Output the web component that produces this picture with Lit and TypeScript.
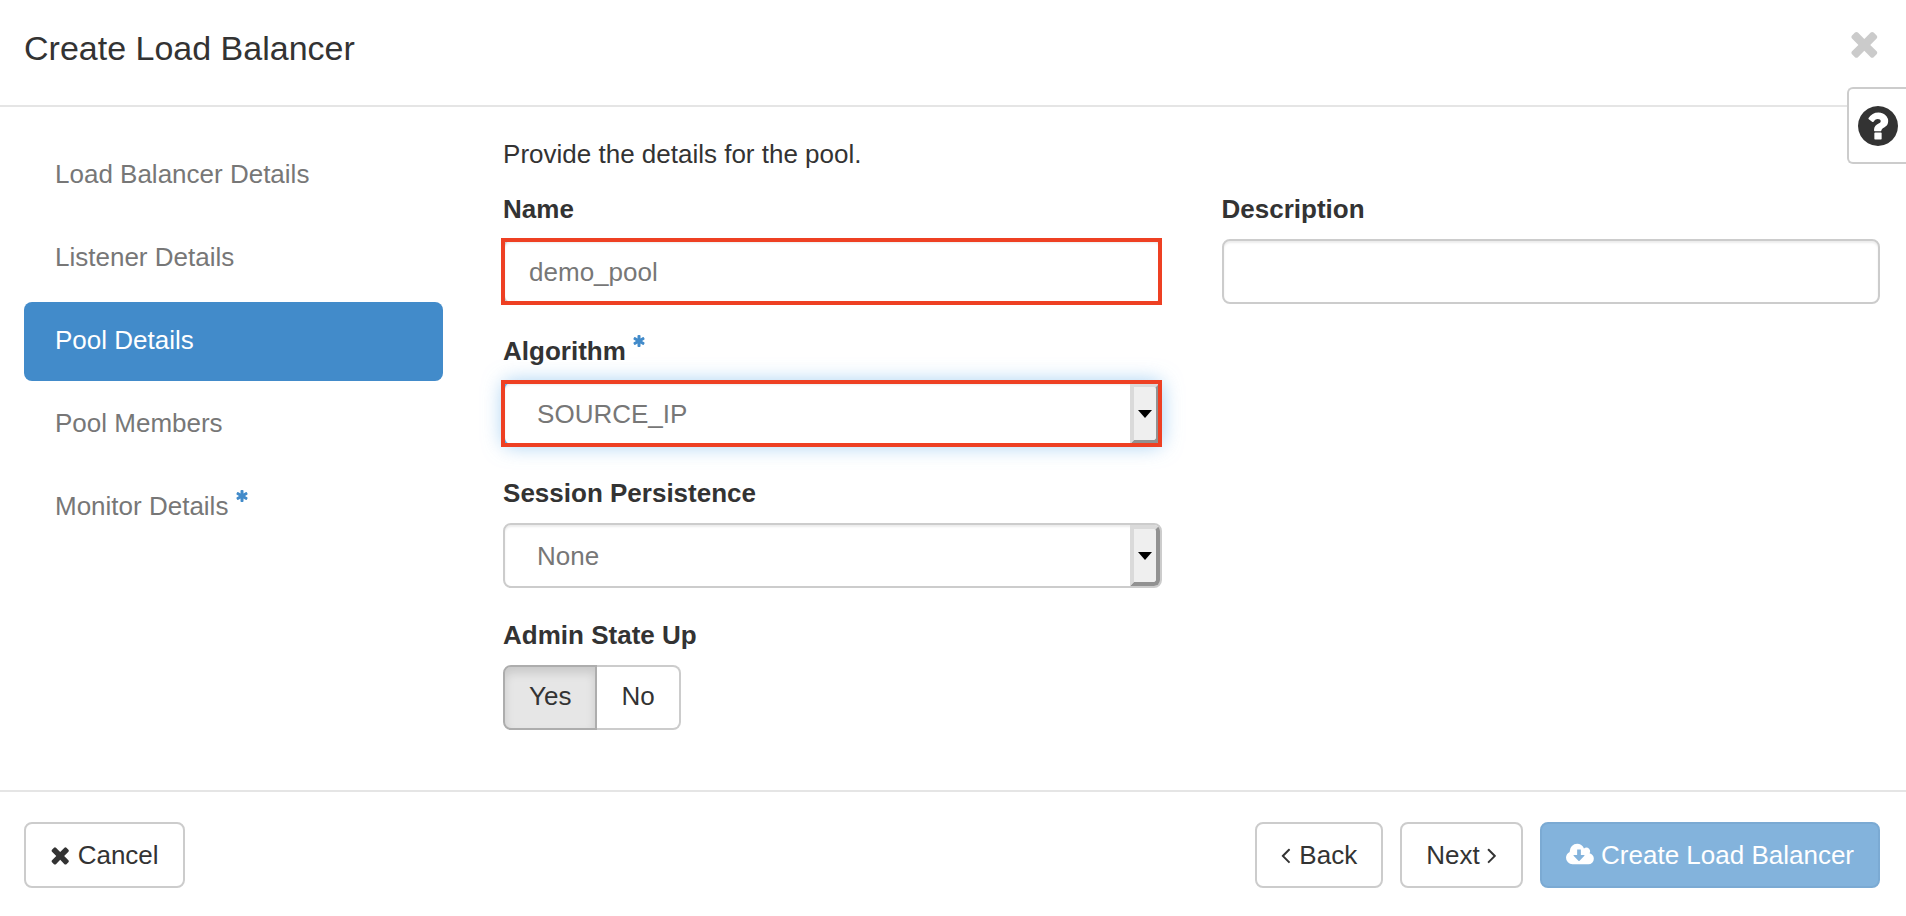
import { LitElement, html, css, nothing } from "lit";
import { customElement, property, state } from "lit/decorators.js";
import { classMap } from "lit/directives/class-map.js";

interface Glyph {
  box: string;
  d: string;
}

const GLYPHS: Record<string, Glyph> = {
  times: {
    box: "192 0 1408 1792",
    d: "M1490 1322q0 40-28 68l-136 136q-28 28-68 28t-68-28l-294-294-294 294q-28 28-68 28t-68-28l-136-136q-28-28-28-68t28-68l294-294-294-294q-28-28-28-68t28-68l136-136q28-28 68-28t68 28l294 294 294-294q28-28 68-28t68 28l136 136q28 28 28 68t-28 68l-294 294 294 294q28 28 28 68z",
  },
  "cloud-download": {
    box: "-64 0 1920 1792",
    d: "M1216 928q0-14-9-23t-23-9h-224v-352q0-13-9.5-22.5t-22.5-9.5h-192q-13 0-22.5 9.5t-9.5 22.5v352h-224q-13 0-22.5 9.5t-9.5 22.5q0 14 9 23l352 352q9 9 23 9t23-9l351-351q10-12 10-24zm640 224q0 159-112.5 271.5t-271.5 112.5h-1088q-185 0-316.5-131.5t-131.5-316.5q0-130 70-240t188-165q-2-30-2-43 0-212 150-362t362-150q156 0 285.5 87t188.5 231q71-62 166-62 106 0 181 75t75 181q0 76-41 138 130 31 213.5 135.5t83.5 238.5z",
  },
  question: {
    box: "128 128 1536 1536",
    d: "M1036 1382v-204q0-14-9-23t-23-9h-216q-14 0-23 9t-9 23v204q0 14 9 23t23 9h216q14 0 23-9t9-23zm250-678q0-92-57-169t-142-119-173-42q-250 0-381 218-15 24 8 42l140 106q7 6 19 6 16 0 25-12 51-65 82-88 32-22 80-22 46 0 80 24t34 54q0 36-19 58t-64 42q-65 29-119 89t-54 130v46q0 14 9 23t23 9h216q14 0 23-9t9-23q0-19 21.5-48t54.5-48q32-18 49-28.5t47-36 46-49 29-62 14-92zm378 192q0 209-103 385.5t-279.5 279.5-385.5 103-385.5-103-279.5-279.5-103-385.5 103-385.5 279.5-279.5 385.5-103 385.5 103 279.5 279.5 103 385.5z",
  },
  asterisk: {
    box: "128 128 1536 1536",
    d: "M1546 1050q46 26 59.5 77.5t-12.5 97.5l-64 110q-26 46-77.5 59.5t-97.5-12.5l-266-153v307q0 52-38 90t-90 38h-128q-52 0-90-38t-38-90v-307l-266 153q-46 26-97.5 12.5t-77.5-59.5l-64-110q-26-46-12.5-97.5t59.5-77.5l266-154-266-154q-46-26-59.5-77.5t12.5-97.5l64-110q26-46 77.5-59.5t97.5 12.5l266 153v-307q0-52 38-90t90-38h128q52 0 90 38t38 90v307l266-153q46-26 97.5-12.5t77.5 59.5l64 110q26 46 12.5 97.5t-59.5 77.5l-266 154z",
  },
  "angle-left": {
    box: "576 0 740 1792",
    d: "M1203 544q0 13-10 23l-393 393 393 393q10 10 10 23t-10 23l-50 50q-10 10-23 10t-23-10l-466-466q-10-10-10-23t10-23l466-466q10-10 23-10t23 10l50 50q10 10 10 23z",
  },
  "angle-right": {
    box: "552 0 700 1792",
    d: "M1171 960q0 13-10 23l-466 466q-10 10-23 10t-23-10l-50-50q-10-10-10-23t10-23l393-393-393-393q-10-10-10-23t10-23l50-50q10-10 23-10t23 10l466 466q10 10 10 23z",
  },
  caret: { box: "0 0 14 8", d: "M0 0h14l-7 8z" },
};

@customElement("fa-icon")
class FaIcon extends LitElement {
  static styles = css`
    :host {
      display: inline-block;
      height: 26px;
      line-height: 0;
      vertical-align: -4px;
    }
    .glyph {
      display: block;
      height: 100%;
      fill: currentColor;
    }
  `;

  @property() name = "";

  render() {
    const glyph = GLYPHS[this.name];
    return html`<svg class="glyph" viewBox=${glyph.box} aria-hidden="true">
      <path d=${glyph.d}></path>
    </svg>`;
  }
}

interface Step {
  id: string;
  label: string;
  required?: boolean;
}

const STEPS: Step[] = [
  { id: "load-balancer", label: "Load Balancer Details" },
  { id: "listener", label: "Listener Details" },
  { id: "pool", label: "Pool Details" },
  { id: "members", label: "Pool Members" },
  { id: "monitor", label: "Monitor Details", required: true },
];

@customElement("app-root")
class AppRoot extends LitElement {
  static styles = css`
    :host {
      display: flex;
      flex-direction: column;
      position: relative;
      min-height: 100vh;
      box-sizing: border-box;
      background: #fff;
      color: #333;
      font: 26px/37px "Liberation Sans", Helvetica, Arial, sans-serif;
    }
    *,
    *::before,
    *::after {
      box-sizing: border-box;
    }
    button,
    input,
    select {
      font: inherit;
      color: inherit;
      margin: 0;
    }
    .header {
      display: flex;
      justify-content: space-between;
      align-items: flex-start;
      padding: 24px 26px 33px 24px;
      border-bottom: 2px solid #e5e5e5;
    }
    .title {
      margin: 0;
      font-size: 34px;
      line-height: 48px;
      font-weight: 400;
    }
    .close {
      padding: 0;
      border: 0;
      background: none;
      color: #cbcbcb;
      line-height: 0;
      cursor: pointer;
    }
    .close fa-icon {
      height: 39px;
      vertical-align: top;
    }
    .help {
      position: absolute;
      top: 87px;
      right: 0;
      padding: 17px 8px 16px 9px;
      border: 2px solid #ccc;
      border-right: 0;
      border-radius: 6px 0 0 6px;
      background: #fff;
      line-height: 0;
      cursor: pointer;
    }
    .help fa-icon {
      height: 40px;
      vertical-align: top;
    }
    .body {
      flex: 1;
      display: grid;
      grid-template-columns: minmax(0, 7fr) minmax(0, 23fr);
      gap: 60px;
      align-items: start;
      padding: 29px 26px 31px 24px;
    }
    .steps {
      display: flex;
      flex-direction: column;
      gap: 4px;
      margin: 0;
      padding: 0;
      list-style: none;
    }
    .step {
      display: block;
      padding: 20px 31px 22px;
      border-radius: 8px;
      color: #777;
      text-decoration: none;
    }
    .step.active {
      background: #428bca;
      color: #fff;
    }
    .required {
      height: 12px;
      vertical-align: 13px;
      color: #428bca;
    }
    .intro {
      margin: 0 0 18px;
    }
    .fields {
      display: grid;
      grid-template-columns: repeat(2, minmax(0, 1fr));
      column-gap: 60px;
      row-gap: 29px;
      margin-bottom: 29px;
    }
    .group {
      grid-column: 1;
      min-width: 0;
      margin: 0;
      padding: 0;
      border: 0;
    }
    .group.second {
      grid-column: 2;
    }
    .label {
      display: block;
      margin-bottom: 11px;
      padding: 0;
      font-weight: 700;
    }
    .control {
      display: block;
      position: relative;
    }
    .control.marked::after {
      content: "";
      position: absolute;
      inset: -1px 0 -1px -2px;
      border: 4px solid #ee4023;
      pointer-events: none;
    }
    .input {
      display: block;
      width: 100%;
      height: 65px;
      padding: 2px 24px 0;
      border: 2px solid #ccc;
      border-radius: 8px;
      outline: 0;
      background: #fff;
      box-shadow: inset 0 2px 2px rgba(0, 0, 0, 0.075);
      color: #777;
    }
    .select {
      appearance: none;
      padding: 2px 40px 0 32px;
    }
    .select.focused {
      border-color: #66afe9;
      box-shadow:
        inset 0 2px 2px rgba(0, 0, 0, 0.075),
        0 0 20px rgba(102, 175, 233, 0.6);
    }
    .arrow {
      position: absolute;
      top: 2px;
      right: 2px;
      bottom: 2px;
      width: 30px;
      display: flex;
      align-items: center;
      justify-content: center;
      border: 4px solid;
      border-color: #dadada #929292 #929292 #dadada;
      border-radius: 0 6px 6px 0;
      background: #efefef;
      color: #000;
      pointer-events: none;
    }
    .arrow fa-icon {
      height: 8px;
    }
    .toggle {
      display: flex;
    }
    .choice {
      position: relative;
      height: 65px;
      padding: 11px 24px;
      border: 2px solid #ccc;
      cursor: pointer;
    }
    .choice.first {
      border-radius: 8px 0 0 8px;
    }
    .choice.last {
      border-left: 0;
      border-radius: 0 8px 8px 0;
    }
    .choice.on {
      border-color: #adadad;
      background: #e6e6e6;
      box-shadow: inset 0 6px 10px rgba(0, 0, 0, 0.125);
    }
    .radio {
      position: absolute;
      inset: 0;
      width: 100%;
      height: 100%;
      opacity: 0;
      cursor: pointer;
    }
    .footer {
      display: flex;
      justify-content: space-between;
      padding: 30px 26px 28px 24px;
      border-top: 2px solid #e5e5e5;
    }
    .actions {
      display: flex;
      gap: 17px;
    }
    .button {
      height: 66px;
      padding: 0 24px;
      border: 2px solid #ccc;
      border-radius: 8px;
      background: #fff;
      white-space: nowrap;
      cursor: pointer;
    }
    .button.primary {
      border-color: #357ebd;
      background: #428bca;
      color: #fff;
    }
    .button:disabled {
      opacity: 0.65;
      cursor: not-allowed;
    }
  `;

  @state() private step = "pool";
  @state() private adminUp = true;

  private star() {
    return html` <fa-icon class="required" name="asterisk"></fa-icon>`;
  }

  private renderStep(item: Step) {
    const active = item.id === this.step;
    return html`<li>
      <a
        class=${classMap({ step: true, active })}
        href="#${item.id}"
        aria-current=${active ? "step" : nothing}
        @click=${() => (this.step = item.id)}
        >${item.label}${item.required ? this.star() : nothing}</a
      >
    </li>`;
  }

  private renderChoice(text: string, value: boolean) {
    return html`<label
      class=${classMap({
        choice: true,
        first: value,
        last: !value,
        on: this.adminUp === value,
      })}
      ><input
        class="radio"
        type="radio"
        name="admin-state"
        .checked=${this.adminUp === value}
        @change=${() => (this.adminUp = value)}
      />${text}</label
    >`;
  }

  render() {
    return html`
      <header class="header">
        <h1 class="title">Create Load Balancer</h1>
        <button class="close" type="button" aria-label="Close">
          <fa-icon name="times"></fa-icon>
        </button>
      </header>
      <button class="help" type="button" aria-label="Help">
        <fa-icon name="question"></fa-icon>
      </button>

      <div class="body">
        <nav>
          <ul class="steps">
            ${STEPS.map((item) => this.renderStep(item))}
          </ul>
        </nav>
        <main>
          <p class="intro">Provide the details for the pool.</p>
          <div class="fields">
            <div class="group">
              <label class="label" for="name">Name</label>
              <div class="control marked">
                <input class="input" id="name" type="text" value="demo_pool" />
              </div>
            </div>
            <div class="group second">
              <label class="label" for="description">Description</label>
              <div class="control">
                <input class="input" id="description" type="text" />
              </div>
            </div>
            <div class="group">
              <label class="label" for="algorithm">Algorithm${this.star()}</label>
              <div class="control marked">
                <select class="input select focused" id="algorithm">
                  <option>SOURCE_IP</option>
                </select>
                <span class="arrow"><fa-icon name="caret"></fa-icon></span>
              </div>
            </div>
            <div class="group">
              <label class="label" for="persistence">Session Persistence</label>
              <div class="control">
                <select class="input select" id="persistence">
                  <option>None</option>
                </select>
                <span class="arrow"><fa-icon name="caret"></fa-icon></span>
              </div>
            </div>
            <fieldset class="group">
              <legend class="label">Admin State Up</legend>
              <div class="toggle">
                ${this.renderChoice("Yes", true)}${this.renderChoice("No", false)}
              </div>
            </fieldset>
          </div>
        </main>
      </div>

      <footer class="footer">
        <button class="button" type="button">
          <fa-icon name="times"></fa-icon> Cancel
        </button>
        <div class="actions">
          <button class="button" type="button">
            <fa-icon name="angle-left"></fa-icon> Back
          </button>
          <button class="button" type="button">
            Next <fa-icon name="angle-right"></fa-icon>
          </button>
          <button class="button primary" type="submit" disabled>
            <fa-icon name="cloud-download"></fa-icon> Create Load Balancer
          </button>
        </div>
      </footer>
    `;
  }
}
